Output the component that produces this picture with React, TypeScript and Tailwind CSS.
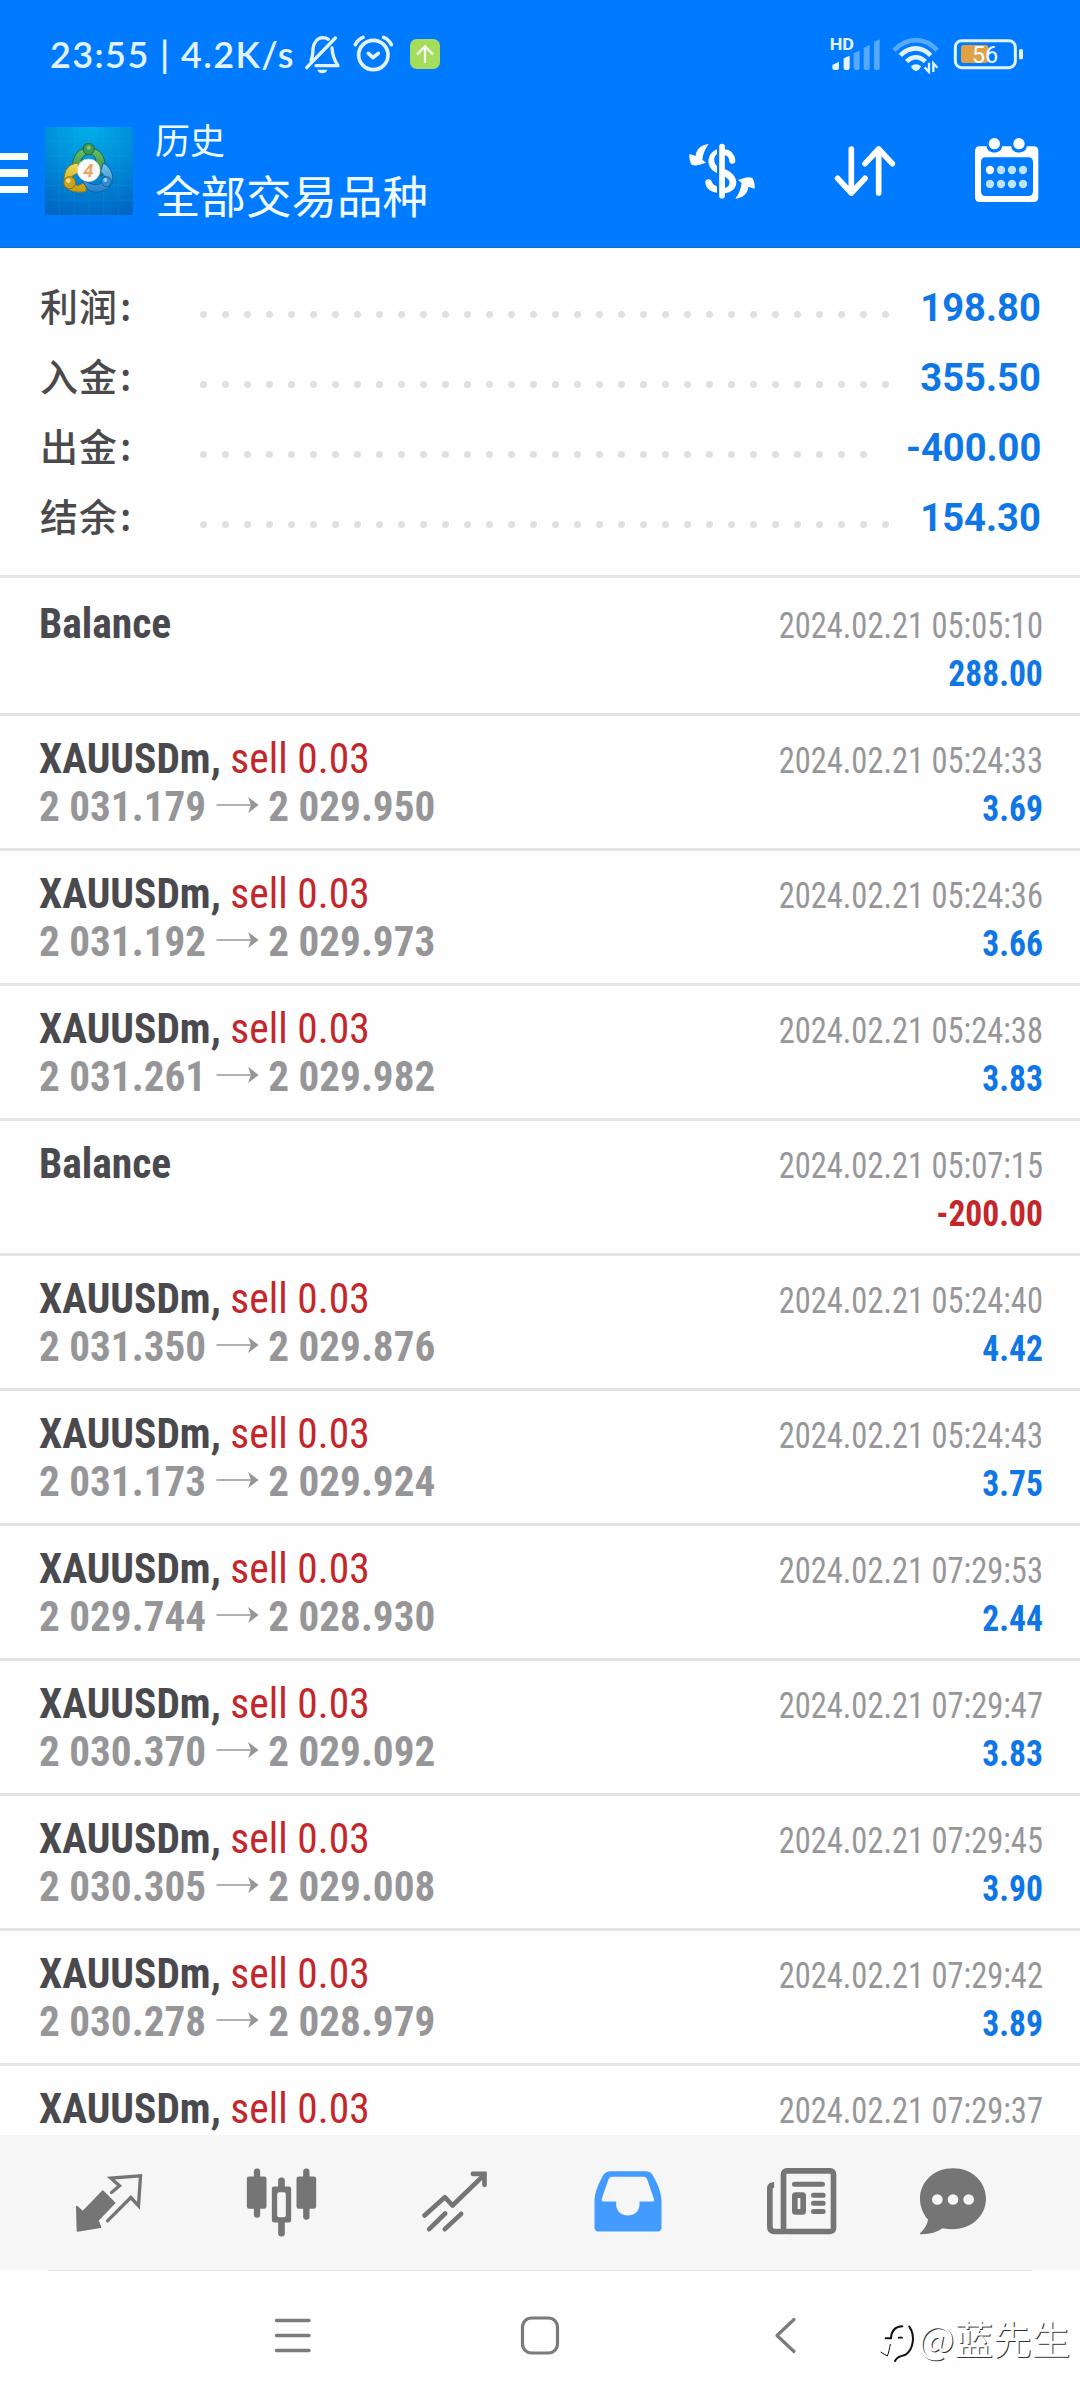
import type { ReactNode } from 'react';

type Deal = {
  balance?: boolean;
  open?: string;
  close?: string;
  time: string;
  value?: string;
};

const summary = [
  { label: '利润', value: '198.80', dots: 32 },
  { label: '入金', value: '355.50', dots: 32 },
  { label: '出金', value: '-400.00', dots: 31 },
  { label: '结余', value: '154.30', dots: 32 },
];

const deals: Deal[] = [
  { balance: true, time: '2024.02.21 05:05:10', value: '288.00' },
  { open: '2 031.179', close: '2 029.950', time: '2024.02.21 05:24:33', value: '3.69' },
  { open: '2 031.192', close: '2 029.973', time: '2024.02.21 05:24:36', value: '3.66' },
  { open: '2 031.261', close: '2 029.982', time: '2024.02.21 05:24:38', value: '3.83' },
  { balance: true, time: '2024.02.21 05:07:15', value: '-200.00' },
  { open: '2 031.350', close: '2 029.876', time: '2024.02.21 05:24:40', value: '4.42' },
  { open: '2 031.173', close: '2 029.924', time: '2024.02.21 05:24:43', value: '3.75' },
  { open: '2 029.744', close: '2 028.930', time: '2024.02.21 07:29:53', value: '2.44' },
  { open: '2 030.370', close: '2 029.092', time: '2024.02.21 07:29:47', value: '3.83' },
  { open: '2 030.305', close: '2 029.008', time: '2024.02.21 07:29:45', value: '3.90' },
  { open: '2 030.278', close: '2 028.979', time: '2024.02.21 07:29:42', value: '3.89' },
  { time: '2024.02.21 07:29:37' },
];

function StatusBar() {
  return (
    <div className="flex h-[108px] items-center pl-[50px] pr-[54px] text-[#e2f3ff]">
      <div className="flex w-[253px] items-center whitespace-pre font-['Lato'] text-[36px] font-semibold tracking-[1.4px]">
        23:55 | 4.2K/s
      </div>
      <svg className="h-10 w-10" viewBox="909 42 120 120" fill="none" stroke="currentColor" strokeWidth="10" strokeLinecap="round" strokeLinejoin="round">
        <path d="M920 143 1006 54" />
        <path d="M933 121C939 110 938 100 939 87 941 66 953 54 968 53 976 53 981 55 985 58" />
        <path d="M996 84C997 102 999 115 1014 137H948" />
        <path d="M952 149h30c-3 14-27 14-30 0Z" fill="currentColor" stroke="none" />
      </svg>
      <svg className="ml-[10px] h-10 w-10" viewBox="1059 42 120 120" fill="none" stroke="currentColor" strokeWidth="11" strokeLinecap="round" strokeLinejoin="round">
        <circle cx="1120" cy="105" r="44" />
        <path d="M1105 100 1119 113 1135 100" />
        <path d="M1066 74C1071 64 1079 56 1089 52M1174 74C1169 64 1161 56 1151 52" />
      </svg>
      <svg className="ml-3 h-10 w-10" viewBox="1215 42 120 120" fill="none">
        <rect x="1230" y="57" width="90" height="90" rx="20" fill="#a4dc5c" />
        <path d="M1275 129V79M1251 103 1275 79 1299 103" stroke="#f8fff0" strokeWidth="7" />
      </svg>
      <div className="ml-auto flex items-center">
        <svg className="h-10 w-[58px]" viewBox="498 42 174 120">
          <text x="509" y="89" fontFamily="Roboto" fontWeight="700" fontSize="48" fill="currentColor" textLength="73" lengthAdjust="spacingAndGlyphs">HD</text>
          <path d="M517 135 537 125V144Q537 150 531 150H523Q517 150 517 144ZM551 115 569 107V144Q569 150 563 150H557Q551 150 551 144Z" fill="currentColor" />
          <path d="M581 100 599 92V144Q599 150 593 150H587Q581 150 581 144ZM611 84 629 74V144Q629 150 623 150H617Q611 150 611 144ZM642 66 659 58V144Q659 150 653 150H648Q642 150 642 144Z" fill="#57a8ff" />
        </svg>
        <svg className="ml-[5px] h-10 w-[52px]" viewBox="687 42 156 120" fill="none" stroke="currentColor">
          <path d="M702 91C740 50 796 50 831 91" stroke="#57a8ff" strokeWidth="14" />
          <path d="M721 106C749 78 785 78 812 106" strokeWidth="14" />
          <path d="M740 125C757 108 778 108 796 125" strokeWidth="14" />
          <path d="M753 139C762 131 774 131 783 139 781 147 774 153 768 153 762 153 755 147 753 139Z" fill="currentColor" stroke="none" />
          <path d="M807 128V156L794 142M820 156V130L832 143" strokeWidth="7" />
        </svg>
        <svg className="ml-[10px] h-10 w-[75px]" viewBox="873 42 225 120">
          <rect x="886" y="62" width="180" height="81" rx="19" fill="none" stroke="currentColor" strokeWidth="9" />
          <rect x="903" y="75" width="82" height="54" rx="8" fill="#dfa143" />
          <rect x="1077" y="87" width="12" height="31" rx="5" fill="currentColor" />
          <text x="975" y="128" textAnchor="middle" fontFamily="Roboto" fontWeight="400" fontSize="70" fill="#f4fbff">56</text>
        </svg>
      </div>
    </div>
  );
}

function Logo() {
  return (
    <svg className="ml-[17px] h-[88px] w-[88px]" viewBox="133 322 264 264">
      <defs>
        <radialGradient id="sky" cx="0.5" cy="0" r="1.05">
          <stop offset="0" stopColor="#00b0ea" />
          <stop offset="0.45" stopColor="#0090da" />
          <stop offset="1" stopColor="#0066c4" />
        </radialGradient>
        <linearGradient id="leaf" x1="0" y1="0" x2="0" y2="1">
          <stop offset="0" stopColor="#6fbf6a" />
          <stop offset="1" stopColor="#2c8a3e" />
        </linearGradient>
        <linearGradient id="gold" x1="0" y1="0" x2="0" y2="1">
          <stop offset="0" stopColor="#f0dc5a" />
          <stop offset="1" stopColor="#c39a10" />
        </linearGradient>
        <linearGradient id="azure" x1="0" y1="0" x2="0" y2="1">
          <stop offset="0" stopColor="#7cc4ee" />
          <stop offset="1" stopColor="#1c7ecb" />
        </linearGradient>
      </defs>
      <rect x="133" y="322" width="264" height="264" fill="url(#sky)" />
      <path d="M133 365H397M133 409H397M133 453H397M133 497H397M133 541H397M177 322V586M221 322V586M265 322V586M309 322V586M353 322V586" stroke="#3fb4ea" strokeOpacity="0.22" strokeWidth="2" />
      <g strokeWidth="3">
        <path d="M216 440C216 402 236 385 265 385S314 404 313 442L302 470 285 440C289 416 282 404 265 404S240 416 241 436Z" fill="url(#leaf)" stroke="#1e6a3c" />
        <path d="M232 430C205 432 190 450 190 482 190 508 215 522 255 516L262 484 232 498C218 496 213 484 216 468L236 458Z" fill="url(#gold)" stroke="#8a7a20" />
        <path d="M308 430C330 442 342 468 334 490 322 516 286 526 262 510L243 482 275 494C298 498 313 488 313 472L300 455Z" fill="url(#azure)" stroke="#16609c" />
        <circle cx="264" cy="388" r="17" fill="#3f9850" stroke="#1e6a3c" />
        <circle cx="207" cy="489" r="18" fill="#c9a420" stroke="#86701a" />
        <circle cx="317" cy="486" r="15" fill="#2f8fd6" stroke="#16609c" />
      </g>
      <circle cx="264" cy="384" r="6" fill="#7cc87a" />
      <circle cx="203" cy="483" r="7" fill="#f0e07a" />
      <circle cx="314" cy="481" r="6" fill="#8fd0f4" />
      <circle cx="264" cy="452" r="34" fill="#fbfaf8" stroke="#c8d4d0" strokeWidth="2" />
      <text x="263" y="472" textAnchor="middle" fontFamily="Roboto" fontStyle="italic" fontWeight="600" fontSize="56" fill="#eda05e">4</text>
    </svg>
  );
}

const exchangeArrow = 'M146 372C124 374 108 388 107 408L88 402C87 414 90 426 95 434 104 438 112 436 119 434L138 428 127 419C129 401 136 385 146 372Z';

function AppBar() {
  return (
    <div className="flex h-[126px] items-center pr-[33px] text-white">
      <div className="mt-1 flex w-7 flex-col gap-[9px]">
        <div className="h-[7.5px] bg-[#f6ffff]" />
        <div className="h-[7.5px] bg-[#f6ffff]" />
        <div className="h-[7.5px] bg-[#f6ffff]" />
      </div>
      <Logo />
      <div className="-mt-[3px] ml-[22px] flex flex-col font-['Noto_Sans_CJK_SC',sans-serif] text-[#f0fbff]">
        <div className="text-[35px] leading-[48px]">历史</div>
        <div className="text-[45.5px] leading-[62px]">全部交易品种</div>
      </div>
      <div className="ml-auto flex gap-[63px]">
        <svg className="h-20 w-20" viewBox="63 333 240 240" fill="none" stroke="currentColor">
          <path d="M186 380V527" strokeWidth="17" strokeLinecap="round" />
          <path d="M192 397C206 397 215 406 217 421" strokeWidth="18" />
          <circle cx="217" cy="422" r="9" fill="currentColor" stroke="none" />
          <path d="M171 388V402C160 410 160 428 171 438V459C138 446 136 402 171 388Z" fill="currentColor" stroke="none" />
          <path fillRule="evenodd" d="M190 446C240 460 244 516 190 520ZM195 470V504C213 499 213 478 195 470Z" fill="currentColor" stroke="none" />
          <path d="M171 518C150 516 137 504 136 487 136 476 152 474 155 484 157 492 162 497 171 499Z" fill="currentColor" stroke="none" />
          <path d={exchangeArrow} fill="currentColor" stroke="none" />
          <path d={exchangeArrow} transform="rotate(180 186 454)" fill="currentColor" stroke="none" />
        </svg>
        <svg className="h-20 w-20" viewBox="492 333 240 240" fill="none" stroke="currentColor" strokeWidth="17" strokeLinecap="round" strokeLinejoin="round">
          <path d="M574 387V519M533 475 574 519 615 475M656 519V387M615 431 656 387 697 431" />
        </svg>
        <svg className="h-20 w-20" viewBox="921 332 240 240">
          <path fillRule="evenodd" fill="currentColor" d="M959 378H980C980 403 1026 403 1026 378H1054C1054 403 1100 403 1100 378H1121Q1135 378 1135 392V531Q1135 545 1121 545H959Q945 545 945 531V392Q945 378 959 378ZM977 411Q963 411 963 425V513Q963 527 977 527H1105Q1119 527 1119 513V425Q1119 411 1105 411Z" />
          <circle cx="1003" cy="370" r="17" fill="currentColor" />
          <circle cx="1077" cy="370" r="17" fill="currentColor" />
          <circle cx="990" cy="449" r="12.5" fill="currentColor" />
          <g fill="#bfe2ff">
            <circle cx="1023" cy="449" r="12.5" />
            <circle cx="1056" cy="449" r="12.5" />
            <circle cx="1089" cy="449" r="12.5" />
            <circle cx="990" cy="491" r="12.5" />
            <circle cx="1023" cy="491" r="12.5" />
            <circle cx="1056" cy="491" r="12.5" />
            <circle cx="1089" cy="491" r="12.5" />
          </g>
        </svg>
      </div>
    </div>
  );
}

function SummaryRow({ label, value, dots }: { label: string; value: string; dots: number }) {
  return (
    <div className="flex h-[70px] items-center pl-10 pr-[39px]">
      <div className="-mt-[5px] w-[160px] font-['Noto_Sans_CJK_SC',sans-serif] text-[38px] font-medium leading-[70px] tracking-[1px] text-[#4a4a4c]">
        {label}<span className="ml-0.5">:</span>
      </div>
      <div className="mt-[14px] flex gap-[15px]">
        {Array.from({ length: dots }, (_, i) => (
          <div key={i} className="h-[7px] w-[7px] rounded-full bg-[#e0e0e0]" />
        ))}
      </div>
      <div className="ml-auto mt-[2px] origin-right scale-x-[0.965] font-['Roboto'] text-[39.5px] font-bold leading-[70px] text-[#0f76e6]">{value}</div>
    </div>
  );
}

function DealRow({ deal, first }: { deal: Deal; first: boolean }) {
  const negative = deal.value?.startsWith('-');
  return (
    <div className={first ? 'h-[138px] shrink-0 border-t-[3px] border-[#e4e4e5] pl-[39px] pr-[37px] pt-[21px]' : 'h-[135px] shrink-0 border-t-[3px] border-[#e4e4e5] pl-[39px] pr-[37px] pt-[18px]'}>
      <div className="flex h-12 items-baseline justify-between font-['Roboto_Condensed'] leading-[48px]">
        <div className="origin-left scale-x-[0.965] text-[43px] font-bold text-[#4a4a4e]">
          {deal.balance ? 'Balance' : 'XAUUSDm, '}
          {!deal.balance && <span className="font-normal text-[#c3272b]">sell 0.03</span>}
        </div>
        <div className="origin-right scale-x-[0.89] text-[36.5px] text-[#97979a]">{deal.time}</div>
      </div>
      {deal.value && (
        <div className="flex h-12 items-baseline font-['Roboto_Condensed'] leading-[48px]">
          <div className="flex origin-left scale-x-[0.957] items-center text-[43px] font-bold text-[#969698]">
            {deal.open ?? '\u00a0'}
            {deal.open && (
              <svg className="mx-[10px] mb-0.5 h-4 w-[45px]" viewBox="0 0 44 16" fill="none">
                <path d="M0 8H40" stroke="currentColor" strokeWidth="1.7" />
                <path d="M44 8 33 0 36 8 33 16Z" fill="currentColor" />
              </svg>
            )}
            {deal.close}
          </div>
          <div className={negative ? 'ml-auto origin-right scale-x-[0.92] text-[36.5px] font-bold text-[#c3272b]' : 'ml-auto origin-right scale-x-[0.92] text-[36.5px] font-bold text-[#0f76e6]'}>{deal.value}</div>
        </div>
      )}
    </div>
  );
}

function Tab({ viewBox, active, last, children }: { viewBox: string; active?: boolean; last?: boolean; children: ReactNode }) {
  return (
    <div className={last ? 'flex w-[131px] justify-center' : 'flex w-[173px] justify-center'}>
      <svg className={active ? 'h-20 w-20 text-[#439bff]' : 'h-20 w-20 text-[#757575]'} viewBox={viewBox} fill="none" stroke="currentColor" strokeLinecap="round" strokeLinejoin="round">
        {children}
      </svg>
    </div>
  );
}

function TabBar() {
  return (
    <div className="flex h-[135px] items-center bg-[#f6f6f6] pl-[22px]">
      <Tab viewBox="55.5 37.5 240 240">
        <path d="M157 122 192 157 142 210 150 230 81 241 79 168 97 184Z" fill="currentColor" strokeWidth="5" />
        <path d="M183 126 207 106 181 83 270 76 264 166 241 141 171 211" strokeWidth="10" strokeLinejoin="miter" />
      </Tab>
      <Tab viewBox="574.5 37.5 240 240">
        <g fill="currentColor" stroke="none">
          <rect x="589" y="78" width="59" height="97" rx="7" />
          <rect x="610" y="54" width="19" height="148" rx="9" />
          <rect x="738" y="78" width="59" height="97" rx="7" />
          <rect x="758" y="54" width="19" height="154" rx="9" />
          <rect x="683" y="81" width="20" height="36" rx="9" />
          <rect x="683" y="208" width="20" height="50" rx="9" />
          <path fillRule="evenodd" d="M671 108H715Q722 108 722 115V209Q722 216 715 216H671Q664 216 664 209V115Q664 108 671 108ZM686 125Q680 125 680 131V194Q680 200 686 200H700Q706 200 706 194V131Q706 125 700 125Z" />
        </g>
      </Tab>
      <Tab viewBox="1093.5 37.5 240 240">
        <path d="M1122 195 1183 140 1206 165 1301 73" strokeWidth="14" />
        <path d="M1267 70H1302V103" strokeWidth="14" strokeLinejoin="miter" />
        <path d="M1136 236 1184 189M1183 236 1232 190" strokeWidth="14" />
      </Tab>
      <Tab viewBox="22.5 37.5 240 240" active>
        <path fillRule="evenodd" stroke="none" fill="currentColor" d="M89 62H197Q210 62 216 73C232 101 243 127 243 153V231Q243 243 231 243H54Q42 243 42 231V153C42 127 53 101 69 73Q76 62 89 62ZM94 79Q87 79 84 86L64 145Q62 153 70 153H107V162C107 206 177 206 177 162V153H215Q223 153 220 145L200 86Q197 79 190 79Z" />
      </Tab>
      <Tab viewBox="541.5 37.5 240 240">
        <rect x="609" y="61" width="150" height="182" rx="10" strokeWidth="17" />
        <path d="M581 103C572 103 568 107 568 115V229C568 239 573 243 582 243H615" strokeWidth="17" strokeLinecap="butt" />
        <path d="M642 101H726M699 134H728M699 158H728M699 183H728" strokeWidth="15" />
        <rect x="643" y="134" width="25" height="50" rx="2" strokeWidth="17" />
      </Tab>
      <Tab viewBox="999 37.5 240 240" last>
        <path fillRule="evenodd" stroke="none" fill="currentColor" d="M1119 53C1175 53 1218 93 1218 144S1175 236 1119 236C1108 236 1098 235 1088 233 1070 245 1048 252 1022 251 1018 250 1020 248 1023 245 1036 233 1043 219 1044 207 1029 191 1020 168 1020 144 1020 93 1063 53 1119 53ZM1072 131a16 16 0 1 0 0 32a16 16 0 1 0 0-32ZM1119 131a16 16 0 1 0 0 32a16 16 0 1 0 0-32ZM1166 131a16 16 0 1 0 0 32a16 16 0 1 0 0-32Z" />
      </Tab>
    </div>
  );
}

function SystemNav() {
  return (
    <div className="relative h-[130px] bg-[#fefefe]">
      <div className="mx-12 h-px bg-[#e2e2e2]" />
      <div className="flex h-[129px] items-center justify-center gap-[207px] text-[#7b7b7b]">
        <svg className="h-10 w-10" viewBox="0 0 40 40" stroke="currentColor" strokeWidth="3.4" strokeLinecap="round">
          <path d="M3.500 4.500H36M3.500 19.500H36M3.500 34.500H36" />
        </svg>
        <svg className="h-10 w-10" viewBox="0 0 40 40" fill="none" stroke="currentColor" strokeWidth="3.2">
          <rect x="2.500" y="2" width="35" height="35" rx="9" />
        </svg>
        <svg className="h-10 w-10" viewBox="0 0 40 40" fill="none" stroke="currentColor" strokeWidth="3.2" strokeLinecap="round" strokeLinejoin="round">
          <path d="M27 3.500 10 19.500 27 35.500" />
        </svg>
      </div>
      <div className="absolute right-[10px] top-[38px] flex items-center">
        <svg className="mt-3 h-[46px] w-10" viewBox="895 515 120 138" fill="none" stroke="#111" strokeLinecap="round" strokeLinejoin="round">
          <path d="M918 570H934C935 548 945 535 968 534" strokeWidth="6" />
          <path d="M957 568H967" strokeWidth="5" />
          <path d="M989 535C1007 562 1002 602 978 619 966 625 954 621 946 638" strokeWidth="6" />
          <path d="M932 588C929 602 927 614 923 623L904 612" strokeWidth="3" />
        </svg>
        <div className="font-['Noto_Sans_CJK_SC',sans-serif] text-[38.5px] leading-[52px] text-white [text-shadow:1px_1px_0.5px_#333]">@蓝先生</div>
      </div>
    </div>
  );
}

export default function App() {
  return (
    <div className="flex h-[2400px] w-[1080px] flex-col overflow-hidden bg-[#fefefe]">
      <header className="h-[248px] shrink-0 border-b border-[#1169cc] bg-[#007bff]">
        <StatusBar />
        <AppBar />
      </header>
      <section className="h-[327px] shrink-0 pt-[24px]">
        {summary.map((row) => (
          <SummaryRow key={row.label} {...row} />
        ))}
      </section>
      <main className="flex min-h-0 flex-1 flex-col overflow-hidden">
        {deals.map((deal, i) => (
          <DealRow key={deal.time} deal={deal} first={i === 0} />
        ))}
      </main>
      <TabBar />
      <SystemNav />
    </div>
  );
}
